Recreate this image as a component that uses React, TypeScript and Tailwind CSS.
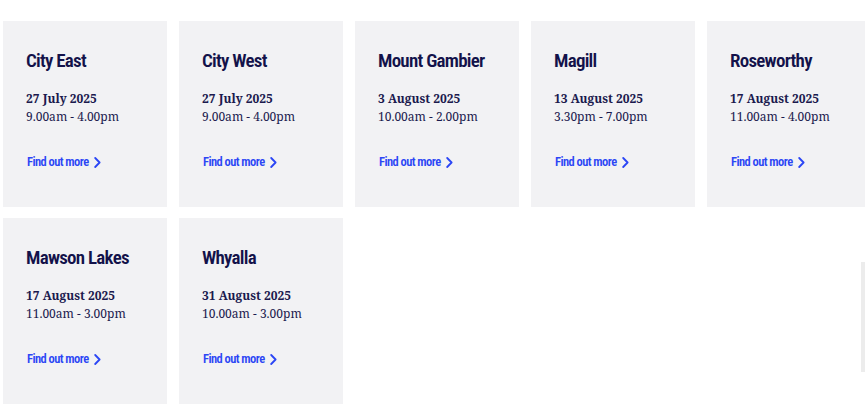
const sessions = [
  { campus: "City East", date: "27 July 2025", time: "9.00am - 4.00pm" },
  { campus: "City West", date: "27 July 2025", time: "9.00am - 4.00pm" },
  { campus: "Mount Gambier", date: "3 August 2025", time: "10.00am - 2.00pm" },
  { campus: "Magill", date: "13 August 2025", time: "3.30pm - 7.00pm" },
  { campus: "Roseworthy", date: "17 August 2025", time: "11.00am - 4.00pm" },
  { campus: "Mawson Lakes", date: "17 August 2025", time: "11.00am - 3.00pm" },
  { campus: "Whyalla", date: "31 August 2025", time: "10.00am - 3.00pm" },
];

function Chevron() {
  return (
    <svg width="7" height="11" viewBox="0 0 7 11" fill="none" className="ml-[5px]">
      <path d="M1.2 1 L5.6 5.5 L1.2 10" stroke="#2b46f5" strokeWidth="1.8" strokeLinecap="round" strokeLinejoin="round" />
    </svg>
  );
}

function SessionCard({ campus, date, time }: { campus: string; date: string; time: string }) {
  return (
    <div className="flex h-[186px] flex-col bg-[#f2f2f4] pl-[23px] pt-[28px]">
      <h3 className="font-['Roboto',sans-serif] text-[19px] font-semibold leading-[24px] tracking-[-0.75px] text-[#13124a] [font-stretch:75%]">
        {campus}
      </h3>
      <div className="mt-[17px] font-['Noto_Serif','Liberation_Serif',serif] text-[12px] leading-[18px] text-[#1b1a4e]">
        <p className="font-bold">{date}</p>
        <p>{time}</p>
      </div>
      <a
        href="#"
        className="mt-[28px] flex items-center pl-[1px] font-['Roboto',sans-serif] text-[12.5px] font-semibold leading-[16px] tracking-[-0.55px] text-[#2b46f5] [font-stretch:75%]"
      >
        Find out more
        <Chevron />
      </a>
    </div>
  );
}

export default function App() {
  return (
    <div className="relative h-[406px] w-full overflow-hidden bg-white">
      <div className="grid w-[871px] grid-cols-[repeat(5,164px)] gap-x-[12px] gap-y-[11px] pl-[3px] pt-[21px]">
        {sessions.map(s => (
          <SessionCard key={s.campus} {...s} />
        ))}
      </div>
      <div className="absolute right-0 top-[262px] h-[110px] w-[4px] bg-[#ececec]" />
    </div>
  );
}
